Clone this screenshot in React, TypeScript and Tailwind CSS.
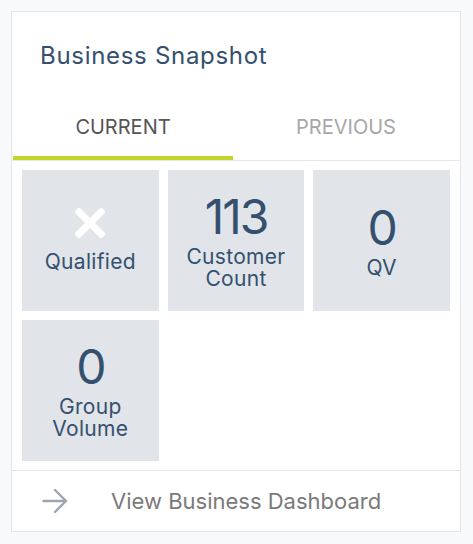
interface Stat {
  value?: string;
  failed?: boolean;
  label: string[];
}

const stats: Stat[] = [
  { failed: true, label: ["Qualified"] },
  { value: "113", label: ["Customer", "Count"] },
  { value: "0", label: ["QV"] },
  { value: "0", label: ["Group", "Volume"] },
];

function CrossIcon() {
  return (
    <svg width="30" height="30" viewBox="0 0 30 30" className="mb-[13px]">
      <path d="M4 4 L26 26 M26 4 L4 26" stroke="#ffffff" strokeWidth="7" strokeLinecap="square" />
    </svg>
  );
}

function ArrowIcon() {
  return (
    <svg width="26" height="26" viewBox="0 0 26 26" fill="none" stroke="#9ca5b0" strokeWidth="2.4" strokeLinecap="round" strokeLinejoin="round">
      <path d="M1.5 13 H24" />
      <path d="M13 2 L24 13 L13 24" />
    </svg>
  );
}

function StatTile({ stat }: { stat: Stat }) {
  return (
    <div className="flex h-[141px] flex-col items-center justify-center bg-[#e1e4e9] text-[#34506e]">
      {stat.failed ? (
        <CrossIcon />
      ) : (
        <div className="mb-[3px] text-[48px] leading-[52px] tracking-[-2px]">{stat.value}</div>
      )}
      <div className="text-center text-[21px] leading-[22px] tracking-[0.3px]">
        {stat.label.map((l) => (
          <div key={l}>{l}</div>
        ))}
      </div>
    </div>
  );
}

export default function App() {
  return (
    <div className="min-h-[544px] bg-[#f8f9fb] p-[11px]" style={{ fontFamily: "Inter, 'Noto Sans', sans-serif" }}>
      <div className="w-[450px] border border-[#e3e5e8] bg-white">
        {/* Header */}
        <div className="px-[28px] pt-[28px] pb-[22px]">
          <h2 className="text-[24px] leading-[32px] tracking-[0.7px] text-[#34506e]">Business Snapshot</h2>
        </div>

        {/* Tabs */}
        <div className="flex border-b border-[#e5e6e8] px-px">
          <button className="flex h-[66px] w-[220px] items-center justify-center border-b-4 border-[#c2d62a] pt-[4px] text-[20px] text-[#555555]">
            CURRENT
          </button>
          <button className="flex h-[66px] flex-1 items-center justify-center text-[20px] text-[#a7a7a7]">
            PREVIOUS
          </button>
        </div>

        {/* Stat tiles */}
        <div className="grid grid-cols-3 gap-[9px] px-[10px] pt-[9px] pb-[9px]">
          {stats.map((s, i) => (
            <StatTile key={i} stat={s} />
          ))}
        </div>

        {/* Footer link */}
        <div className="flex h-[61px] items-center border-t border-[#e5e6e8] pl-[30px]">
          <ArrowIcon />
          <span className="ml-[43px] text-[22px] text-[#7a7a7a]">View Business Dashboard</span>
        </div>
      </div>
    </div>
  );
}
